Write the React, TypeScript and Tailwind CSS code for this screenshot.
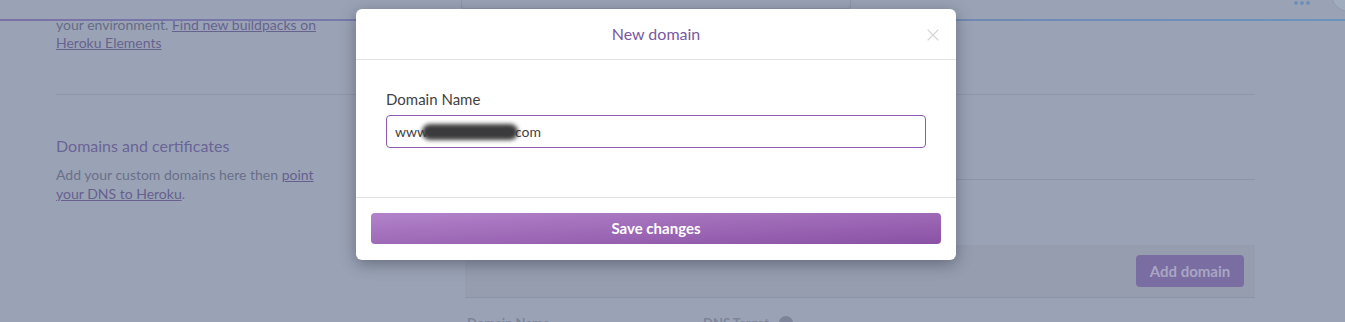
import React from 'react';
import { X } from 'lucide-react';

const font = { fontFamily: 'Lato, "Open Sans", sans-serif' };

const Header: React.FC = () => (
  <div className="flex items-start h-[19px] overflow-hidden">
    {/* search box bottom edge */}
    <div className="ml-[461px] w-[390px] h-[9px] border-x border-b border-[#8d95a8] rounded-b-[3px]" />
    <div className="ml-auto mt-[1px] flex gap-[2px]">
      <span className="w-[4px] h-[4px] rounded-full bg-[#6f8fb8]" />
      <span className="w-[4px] h-[4px] rounded-full bg-[#6f8fb8]" />
      <span className="w-[4px] h-[4px] rounded-full bg-[#6f8fb8]" />
    </div>
    <div className="ml-[21px] -mt-[24px] mr-[-22px] w-[36px] h-[36px] rounded-full bg-[#a2acbf] border border-[#8f9ab0]" />
  </div>
);

const Page: React.FC = () => (
  <div className="flex flex-col h-full">
    <Header />
    <div className="h-[2px] bg-gradient-to-r from-[#7a72a7] via-[#7480ad] to-[#6a93bb]" />
    <div className="flex-1 overflow-hidden">
      <div className="ml-[56px] w-[1199px]">
        {/* buildpacks section tail */}
        <div className="-mt-[5px] h-[79px] border-b border-[#8e97aa]">
          <p className="w-[266px] text-[14px] leading-[18px] text-[#666b86]">
            your environment.{' '}
            <span className="underline text-[#68628f]">Find new buildpacks on Heroku Elements</span>
          </p>
        </div>
        {/* domains section */}
        <div className="flex">
          <div className="w-[409px] pt-[41px]">
            <h3 className="text-[16px] leading-[20px] text-[#6a6497]">Domains and certificates</h3>
            <p className="mt-[9px] w-[266px] text-[14px] leading-[19px] text-[#6a6f8a]">
              Add your custom domains here then{' '}
              <span className="underline text-[#67608f]">point your DNS to Heroku</span>.
            </p>
          </div>
          <div className="flex-1">
            <div className="h-[85px] border-b border-[#8c95a8]" />
            <div className="h-[65px]" />
            <div className="h-[53px] bg-[#959daf] border-b border-[#8c95a8] flex items-center justify-end pr-[11px]">
              <button className="w-[108px] h-[32px] rounded-[4px] bg-[#7a6da2] text-[15px] font-bold text-[#a9a6c2]">
                Add domain
              </button>
            </div>
            <div className="mt-[17px] flex items-center text-[13px] font-bold text-[#7d8399] leading-[16px]">
              <span className="ml-[2px] w-[236px]">Domain Name</span>
              <span>DNS Target</span>
              <span className="ml-[10px] w-[14px] h-[14px] rounded-full bg-[#7d8399]" />
            </div>
          </div>
        </div>
      </div>
    </div>
  </div>
);

const Modal: React.FC = () => (
  <div className="absolute left-[356px] top-[9px] w-[600px] bg-white rounded-[6px] shadow-[0_4px_16px_rgba(40,45,60,0.45)]">
    <div className="relative h-[51px] flex items-center justify-center border-b border-[#e3e3e6]">
      <span className="text-[16px] text-[#79589f]">New domain</span>
      <X size={20} strokeWidth={1.3} className="absolute right-[13px] top-[16px] text-[#d3d3d7]" />
    </div>
    <div className="px-[30px] pt-[30px] pb-[49px] border-b border-[#e3e3e6]">
      <label className="block text-[15px] leading-[18px] text-[#3f3f44]">Domain Name</label>
      <div className="mt-[7px] h-[33px] border border-[#8e5bb2] rounded-[4px] flex items-center px-[8px] text-[14px] text-[#3f3f44]">
        <span>www</span>
        <span className="inline-block w-[96px] h-[16px] -ml-[6px] rounded-full bg-[#3b3b3d] blur-[2px]" />
        <span className="-ml-[3px]">com</span>
      </div>
    </div>
    <div className="px-[15px] pt-[15px] pb-[16px]">
      <button className="w-full h-[31px] rounded-[4px] bg-gradient-to-br from-[#b283ca] to-[#8a51a4] text-white text-[15px] font-bold">
        Save changes
      </button>
    </div>
  </div>
);

export default function App() {
  return (
    <div style={font} className="relative w-[1345px] h-[322px] overflow-hidden bg-[#9aa3b5]">
      <Page />
      <Modal />
    </div>
  );
}
